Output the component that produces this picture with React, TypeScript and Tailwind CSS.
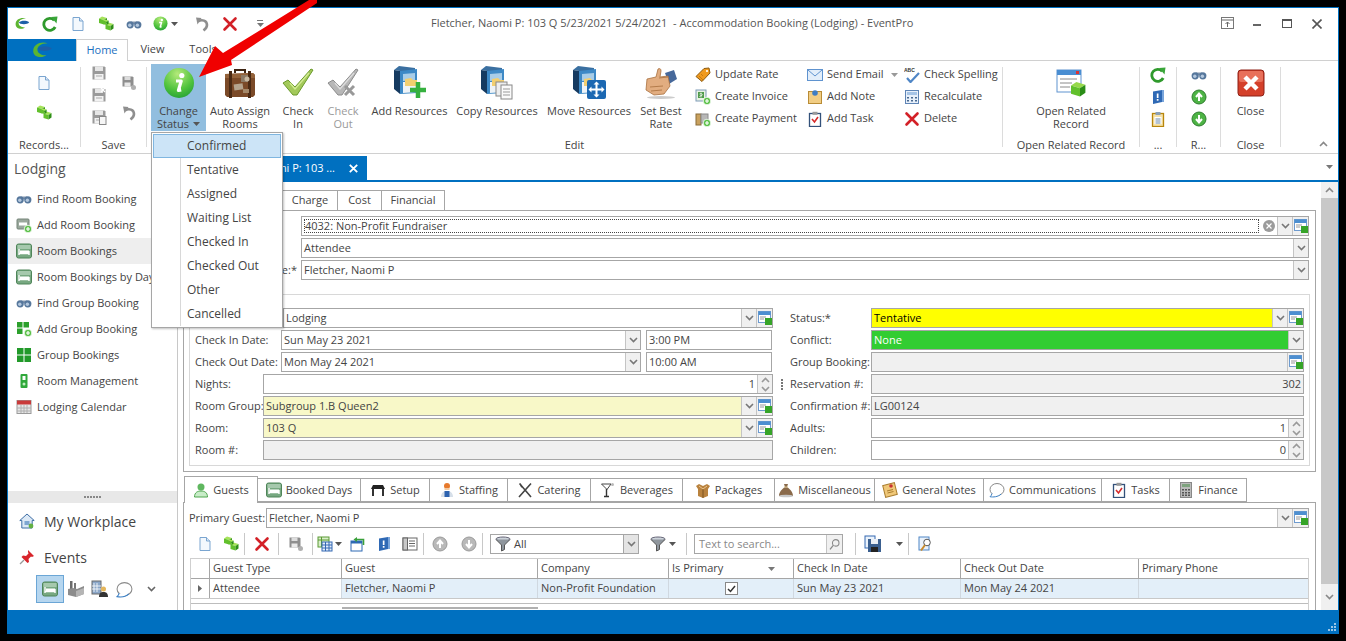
import React from "react";

type IP = { s?: number };
const Svg = ({ s = 16, v = 16, children }: { s?: number; v?: number; children: React.ReactNode }) => (
  <svg width={s} height={s} viewBox={`0 0 ${v} ${v}`} className="shrink-0 block">{children}</svg>
);

const CubeShape = ({ x, y, c = 1, dark = "#2f8f17", mid = "#62c02c", top = "#a6e35a" }: { x: number; y: number; c?: number; dark?: string; mid?: string; top?: string }) => (
  <g transform={`translate(${x} ${y}) scale(${c})`}>
    <polygon points="0,2 3,0 8,1.5 5,3.5" fill={top} />
    <polygon points="0,2 5,3.5 5,8 0,6.5" fill={mid} />
    <polygon points="5,3.5 8,1.5 8,6 5,8" fill={dark} />
  </g>
);

const Eyes = ({ s }: IP) => (
  <Svg s={s}>
    <rect x="5" y="5.5" width="6" height="2.5" fill="#8195ad" />
    <circle cx="4.2" cy="8.8" r="3.6" fill="#56779c" />
    <circle cx="11.8" cy="8.8" r="3.6" fill="#56779c" />
    <circle cx="3.8" cy="9.3" r="1.7" fill="#b4c8de" />
    <circle cx="11.4" cy="9.3" r="1.7" fill="#b4c8de" />
  </Svg>
);
const Refresh = ({ s }: IP) => (
  <Svg s={s}>
    <path d="M12.2 4.2A6 6 0 1 0 13.2 11" fill="none" stroke="#2f9a2c" strokeWidth="2.8" />
    <polygon points="9,1 15.5,0.5 14.5,7.5" fill="#3aa63a" />
  </Svg>
);
const NewDoc = ({ s }: IP) => (
  <Svg s={s}>
    <path d="M3 1.5h6.5L13 5v9.5H3z" fill="#f3f8fd" stroke="#7aa5d0" />
    <path d="M9.5 1.5V5H13" fill="#dbe8f5" stroke="#7aa5d0" />
  </Svg>
);
const Cubes = ({ s }: IP) => (
  <Svg s={s}>
    <CubeShape x={1} y={0.5} />
    <CubeShape x={7.5} y={6.5} />
    <CubeShape x={5} y={3.5} c={0.7} />
  </Svg>
);
const Info = ({ s = 16 }: IP) => (
  <svg width={s} height={s} viewBox="0 0 32 32" className="shrink-0 block">
    <defs>
      <radialGradient id="ig" cx="0.45" cy="0.2" r="0.9">
        <stop offset="0" stopColor="#b5ea7a" />
        <stop offset="0.6" stopColor="#4ec23c" />
        <stop offset="1" stopColor="#1d9a35" />
      </radialGradient>
    </defs>
    <circle cx="16" cy="16" r="15" fill="url(#ig)" />
    <circle cx="18.8" cy="8.5" r="2.6" fill="#fff" />
    <path d="M13 14h5.2l-2.8 9.5 2.8-.6" fill="none" stroke="#fff" strokeWidth="3.2" strokeLinejoin="round" />
  </svg>
);
const Undo = ({ s, c = "#8f8f8f" }: IP & { c?: string }) => (
  <Svg s={s}>
    <path d="M4 5.5c4-2.5 9-1 9 3.5 0 2.5-1.500 4-3.500 5.500" fill="none" stroke={c} strokeWidth="2.600" />
    <polygon points="2,1.500 7.500,2 3.500,8.500" fill={c} />
  </Svg>
);
const RedX = ({ s }: IP) => (
  <Svg s={s}>
    <path d="M2.500 2.500l11 11M13.500 2.500l-11 11" stroke="#d32027" strokeWidth="2.600" strokeLinecap="round" />
  </Svg>
);
const Caret = ({ c = "#555" }: { c?: string }) => (
  <svg width="7" height="4" viewBox="0 0 7 4" className="shrink-0 block"><polygon points="0,0 7,0 3.500,4" fill={c} /></svg>
);
const Chev = ({ c = "#777", up = false }: { c?: string; up?: boolean }) => (
  <svg width="9" height="6" viewBox="0 0 9 6" className="shrink-0 block">
    <path d={up ? "M1 5l3.500-3.500L8 5" : "M1 1l3.500 3.500L8 1"} fill="none" stroke={c} strokeWidth="1.600" />
  </svg>
);
const Floppy = ({ s, c = "#9a9a9a", mark }: IP & { c?: string; mark?: "x" | "doc" }) => (
  <Svg s={s}>
    <path d="M1.500 1.500h12l1 1v12h-13z" fill={c} />
    <rect x="4" y="1.500" width="8" height="4.500" fill="#e6e6e6" />
    <rect x="3.500" y="9" width="9" height="5.500" fill="#f2f2f2" />
    <rect x="5" y="10.500" width="6" height="1" fill="#aaa" />
    {mark === "x" && <path d="M10 1l4 4M14 1l-4 4" stroke="#fff" strokeWidth="1.300" />}
    {mark === "doc" && <rect x="8.500" y="7.500" width="6.500" height="8" fill="#f6f6f6" stroke="#888" />}
  </Svg>
);
const FloppyMini = ({ s }: IP) => (
  <Svg s={s}>
    <path d="M1.500 1.500h10l1 1v9h-11z" fill="#8e8e8e" />
    <rect x="3.500" y="1.500" width="6" height="3.500" fill="#dcdcdc" />
    <rect x="3.500" y="7.500" width="6" height="4" fill="#e9e9e9" />
    <circle cx="12.500" cy="12.500" r="2.500" fill="#b0b0b0" />
  </Svg>
);
const Suitcase = ({ s = 32 }: IP) => (
  <Svg s={s} v={32}>
    <path d="M11 6V3h10v3" fill="none" stroke="#3d2412" strokeWidth="2" />
    <path d="M1 7l28-1 2 2v20l-2 2H3l-2-2z" fill="#7b4a28" />
    <path d="M1 7l28-1 2 2v3H1z" fill="#93623a" />
    <rect x="5" y="4" width="3" height="27" fill="#4a2a14" />
    <rect x="24" y="4" width="3" height="27" fill="#4a2a14" />
    <rect x="10" y="17" width="9" height="6" fill="#b4a48e" transform="rotate(-8 14 20)" />
    <rect x="17" y="8" width="7" height="7" fill="#8c7a66" />
    <circle cx="23" cy="12" r="2.500" fill="#c7b7a0" />
    <rect x="19" y="22" width="6" height="4" fill="#a5896a" />
  </Svg>
);
const BigCheck = ({ s = 32, gray }: IP & { gray?: boolean }) => (
  <Svg s={s} v={32}>
    <path d="M1 16l5-3 7 7L29 2l2 1-16 25h-4z" fill={gray ? "#b7b7b7" : "#a3c95a"} stroke={gray ? "#8c8c8c" : "#6b9a2c"} />
    <path d="M8 16l5 6L27 6" fill="none" stroke={gray ? "#dcdcdc" : "#d4ec94"} strokeWidth="1.400" />
    {gray && <path d="M18 19l9 9M27 19l-9 9" stroke="#999" strokeWidth="3" />}
  </Svg>
);
const Cabinet = ({ kind }: { kind: "plus" | "copy" | "move" }) => (
  <Svg s={34} v={34}>
    <polygon points="1,4 6,0 22,2 22,5 7,5" fill="#3a6fa0" />
    <polygon points="1,4 7,5 7,28 1,23" fill="#153a60" />
    <polygon points="7,5 24,3 24,27 7,28" fill="#3d89c6" />
    <polygon points="10,8 22,7 22,14 10,15" fill="#a8cde8" />
    <polygon points="10,16 24,16 24,26 10,27" fill="#eef3f7" />
    <polygon points="12,13 18,12 20,14 24,14 24,20 12,20" fill="#f2cf70" />
    {kind === "plus" && <path d="M25 16v16M17 24h16" stroke="#35b13f" strokeWidth="4.500" />}
    {kind === "copy" && (
      <g>
        <rect x="16" y="16" width="11" height="14" fill="#eee" stroke="#888" />
        <rect x="21" y="19" width="11" height="14" fill="#fafafa" stroke="#888" />
        <path d="M23 23h7M23 26h7M23 29h7" stroke="#999" />
      </g>
    )}
    {kind === "move" && (
      <g>
        <rect x="15" y="14" width="19" height="19" rx="2" fill="#1c68b2" />
        <path d="M24.500 17v13M18 23.500h13" stroke="#fff" strokeWidth="2" />
        <path d="M24.500 15.500l3 3h-6zM24.500 31.500l3-3h-6zM16.500 23.500l3-3v6zM32.500 23.500l-3-3v6z" fill="#fff" />
      </g>
    )}
  </Svg>
);
const Hand = () => (
  <Svg s={34} v={34}>
    <path d="M21 7l9-3 3 9-8 5z" fill="#46689a" />
    <path d="M3 13l9-2 2-8c2-1 3 0 3 2l-1 6 8-1 2 10-6 8-10 1-8-5z" fill="#e2ad80" stroke="#a8703f" strokeWidth="0.800" />
    <path d="M6 21l13-1M7 25l11-1M15 12l9-1" stroke="#b47c4b" strokeWidth="1" />
    <ellipse cx="17" cy="31.500" rx="14" ry="1.500" fill="#ccc" />
  </Svg>
);
const Tag = () => (
  <Svg>
    <path d="M1 9.500L9 1.500l5-.5 1 5-8 8.500z" fill="#f09a1e" stroke="#8b5a10" />
    <circle cx="12" cy="4" r="1.100" fill="#fff" />
    <path d="M4 9l4 4M6 7l2 2" stroke="#c87a10" />
  </Svg>
);
const PlusDot = () => (
  <g>
    <circle cx="12" cy="12" r="3.800" fill="#5cc14a" stroke="#fff" strokeWidth="0.800" />
    <path d="M12 10v4M10 12h4" stroke="#fff" strokeWidth="1.200" />
  </g>
);
const Invoice = () => (
  <Svg>
    <rect x="1" y="1" width="10" height="11" fill="#e8f2e4" stroke="#7f9bb8" />
    <rect x="3" y="3" width="6" height="6" fill="#4f9b4c" />
    <path d="M6 3.500v5M4.500 5c1-1 3 0 3 .9s-3 .6-3 1.800" fill="none" stroke="#fff" strokeWidth="0.700" />
    <PlusDot />
  </Svg>
);
const Payment = () => (
  <Svg>
    <rect x="1" y="3" width="5" height="11" fill="#c9a15e" stroke="#8a6c38" />
    <rect x="6" y="3" width="7" height="9" fill="#b7b7b7" stroke="#8a8a8a" />
    <PlusDot />
  </Svg>
);
const Mail = () => (
  <Svg>
    <rect x="0.500" y="2.500" width="15" height="11" fill="#e3eefa" stroke="#5f93cf" />
    <path d="M1 3l7 6 7-6" fill="none" stroke="#5f93cf" />
  </Svg>
);
const Note = () => (
  <Svg>
    <rect x="1.500" y="2.500" width="13" height="12" fill="#f1cd84" stroke="#b98c36" />
    <circle cx="8" cy="4" r="2.800" fill="#3f7dc4" />
  </Svg>
);
const TaskIcon = ({ s }: IP) => (
  <Svg s={s}>
    <rect x="2.500" y="2.500" width="11" height="13" fill="#fff" stroke="#33517a" strokeWidth="1.300" />
    <rect x="5.500" y="0.800" width="5" height="3" fill="#999" />
    <path d="M5 8l2.500 3 3.500-5" fill="none" stroke="#d62b2b" strokeWidth="1.600" />
  </Svg>
);
const Abc = () => (
  <Svg>
    <text x="0" y="5" fontSize="5" fontWeight="700" fontFamily="'Liberation Sans', sans-serif" fill="#333">ABC</text>
    <path d="M3 11l3.500 4L15 6" fill="none" stroke="#4f86c6" strokeWidth="2.200" />
  </Svg>
);
const CalcBlue = () => (
  <Svg>
    <rect x="1.500" y="1.500" width="13" height="13" fill="#e8f0fa" stroke="#5f85b6" />
    <rect x="3" y="3" width="10" height="3" fill="#a6c4e6" />
    <path d="M3 8h2v1.500H3zM7 8h2v1.500H7zM11 8h2v1.500h-2zM3 11h2v1.500H3zM7 11h2v1.500H7zM11 11h2v1.500h-2z" fill="#47688f" />
  </Svg>
);
const OpenRelated = () => (
  <Svg s={32} v={32}>
    <rect x="2" y="3" width="24" height="22" fill="#fff" stroke="#5f93cf" />
    <rect x="2" y="3" width="24" height="5" fill="#4a8ed2" />
    <rect x="21" y="4" width="3" height="3" fill="#d33" />
    <path d="M5 12h17M5 16h12M5 20h10" stroke="#8a8a8a" />
    <CubeShape x={16} y={15} c={1.800} dark="#2a8d17" mid="#62c02c" top="#97d94b" />
  </Svg>
);
const BlueBook = ({ s }: IP) => (
  <Svg s={s}>
    <path d="M3 2.500l9-1.500v12l-9 2z" fill="#2f69b5" />
    <rect x="12" y="1" width="2" height="12" fill="#79a5db" />
    <rect x="6.800" y="4.500" width="1.700" height="4.500" fill="#fff" />
    <rect x="6.800" y="10" width="1.700" height="1.700" fill="#fff" />
  </Svg>
);
const ClipOrange = () => (
  <Svg>
    <rect x="2.500" y="2.500" width="11" height="13" fill="#f6e2a8" stroke="#b8860b" strokeWidth="1.300" />
    <rect x="5.500" y="1" width="5" height="3" fill="#8aa0b8" />
    <rect x="4.500" y="6" width="7" height="7" fill="#fff" />
    <path d="M5.500 8h5M5.500 10h5M5.500 12h5" stroke="#6a89a8" />
  </Svg>
);
const GreenArrow = ({ down, gray }: { down?: boolean; gray?: boolean }) => (
  <Svg>
    <circle cx="8" cy="8" r="7" fill={gray ? "#b9b9b9" : "#4db344"} stroke={gray ? "#9a9a9a" : "#2e7d2e"} />
    <path d={down ? "M8 4v7M5 8l3 3.500L11 8" : "M8 12V5M5 8l3-3.500L11 8"} fill="none" stroke="#fff" strokeWidth="2" />
  </Svg>
);
const CloseBig = () => (
  <Svg s={28} v={28}>
    <rect x="1" y="1" width="26" height="26" rx="3" fill="#d4402a" stroke="#8e2116" />
    <rect x="2" y="2" width="24" height="11" rx="2" fill="#e8705a" />
    <path d="M8 8l12 12M20 8L8 20" stroke="#fff" strokeWidth="4.500" />
  </Svg>
);
const Bed = ({ s = 16 }: IP) => (
  <Svg s={s}>
    <rect x="0.500" y="1" width="15" height="14" rx="2" fill="#77a881" stroke="#4f8559" />
    <rect x="1.500" y="2" width="13" height="4" fill="#a6c9ad" />
    <path d="M3 6v6M13 8v4M3 10.500h10" stroke="#fff" strokeWidth="1.400" />
    <rect x="4" y="7.500" width="9" height="2.500" fill="#fff" />
  </Svg>
);
const BedAdd = () => (
  <Svg>
    <rect x="1" y="2" width="12" height="10" rx="1" fill="#9aa89c" stroke="#748478" />
    <rect x="3" y="5.500" width="8" height="3" fill="#fff" />
    <PlusDot />
  </Svg>
);
const GridAdd = () => (
  <Svg>
    <path d="M1 1h5.500v5.500H1zM7.500 1H13v5.500H7.500zM1 7.500h5.500V13H1z" fill="#2ca02c" />
    <PlusDot />
  </Svg>
);
const GridGreen = () => (
  <Svg>
    <path d="M1 1h6.500v6.500H1zM8.500 1H15v6.500H8.500zM1 8.500h6.500V15H1zM8.500 8.500H15V15H8.500z" fill="#229a2a" />
  </Svg>
);
const RoomMgmt = () => (
  <Svg>
    <rect x="4.500" y="1" width="7" height="14" rx="1" fill="#2fa83a" />
    <rect x="6.500" y="3" width="3" height="4" fill="#fff" />
    <circle cx="8" cy="11" r="1.500" fill="#bfeec0" />
  </Svg>
);
const CalendarIc = () => (
  <Svg>
    <rect x="1" y="1.500" width="14" height="13" fill="#e6e6e6" stroke="#9a9a9a" />
    <rect x="1" y="1.500" width="14" height="4" fill="#c93a3a" />
    <path d="M5 6v8M8 6v8M11 6v8M1 9h14M1 12h14" stroke="#b0b0b0" />
  </Svg>
);
const House = () => (
  <Svg>
    <path d="M8 1L0.800 7.500h2V15h10.400V7.500h2z" fill="#dce9f6" stroke="#3f6ea5" />
    <rect x="5.500" y="8" width="5" height="4" fill="#7da6d1" />
    <circle cx="12" cy="13" r="2.400" fill="#63b043" />
  </Svg>
);
const Pin = () => (
  <Svg>
    <path d="M9 1l6 6-2 1-1-.5L9.500 10l.5 3-1.500 1-6-6L4 6.500l3 .5 2.500-2.500L9 3z" fill="#d8252b" />
    <path d="M5 11l-4 4" stroke="#999" strokeWidth="1.200" />
  </Svg>
);
const Factory = () => (
  <Svg s={18} v={18}>
    <rect x="3" y="1" width="2.500" height="8" fill="#6b6b6b" />
    <rect x="7" y="3" width="2" height="6" fill="#777" />
    <path d="M1 9l5 -1 4 1 7-3v8l-8 3-8-2z" fill="#8c8c8c" />
    <path d="M9 11l8-3v6l-8 3z" fill="#b5b5b5" />
  </Svg>
);
const BuildingPerson = () => (
  <Svg s={18} v={18}>
    <rect x="1" y="1" width="9" height="13" fill="#8ba7c9" stroke="#6a6a6a" />
    <path d="M3 3v9M6 3v9M1 6h9M1 9h9" stroke="#fff" strokeWidth="0.800" />
    <circle cx="12.500" cy="9" r="2.500" fill="#e5b65a" />
    <path d="M8 17c0-4 2-5 4.500-5s4.500 1 4.500 5z" fill="#333" />
  </Svg>
);
const Bubble = ({ s = 16 }: IP) => (
  <Svg s={s}>
    <ellipse cx="8" cy="7.500" rx="7" ry="6" fill="#fff" stroke="#8a8a8a" />
    <path d="M3 11.500c-.3 1.500-1 2.500-2 3.200 3 .6 8 .3 11-2.600" fill="#fff" stroke="#3b7fc4" />
  </Svg>
);
const Person = () => (
  <Svg>
    <circle cx="8" cy="5" r="3.500" fill="#5fb75f" />
    <path d="M1.500 15c0-4.500 3-6 6.500-6s6.500 1.500 6.500 6z" fill="#c8ecc8" stroke="#4ea64e" />
  </Svg>
);
const TableBlack = () => (
  <Svg>
    <path d="M3 3h10l2 4H1z" fill="#222" />
    <path d="M2 7h2v7H2zM12 7h2v7h-2z" fill="#333" />
  </Svg>
);
const Staff = () => (
  <Svg>
    <circle cx="8" cy="4" r="3" fill="#e77a2c" />
    <rect x="5.500" y="6" width="5" height="2" fill="#f3c9a0" />
    <path d="M2 15c0-4 2.500-6 6-6s6 2 6 6z" fill="#d6dfe9" />
    <rect x="5.500" y="9" width="5" height="6" fill="#2d63b0" />
  </Svg>
);
const Catering = () => (
  <Svg>
    <path d="M2 1l12 14M3.500 1v3c0 1 1 1 2 2M6 1L14 1" stroke="none" />
    <path d="M2.500 1.500l11.500 13.500M14 1.500L2 15" stroke="#444" strokeWidth="1.600" />
  </Svg>
);
const Martini = () => (
  <Svg>
    <path d="M1.500 2h9.500L7 7.500z" fill="#fff" stroke="#444" />
    <path d="M6.500 7v7M4 14.500h5" stroke="#333" strokeWidth="1.400" />
    <circle cx="12.500" cy="2.500" r="1.500" fill="#b9b9b9" />
  </Svg>
);
const BoxIc = () => (
  <Svg>
    <path d="M1 4l3-2 4 2 4-2 3 2-2 3v7l-5 2-5-2V7z" fill="#b9823e" />
    <path d="M8 7v9" stroke="#7a5220" />
    <path d="M4 4l4 3 4-3" fill="none" stroke="#eac48e" />
  </Svg>
);
const Sack = () => (
  <Svg>
    <path d="M6 2h4l-1 3c3 2 6 5 6 9H1c0-4 3-7 6-9z" fill="#8a6a4a" />
    <rect x="6" y="4.500" width="4" height="1.200" fill="#d8c090" />
    <ellipse cx="8" cy="14" rx="7" ry="1.300" fill="#c8c8c8" />
  </Svg>
);
const GenNote = () => (
  <Svg>
    <rect x="2" y="2" width="12" height="12" fill="#f0c879" stroke="#a97c2c" transform="rotate(-14 8 8)" />
    <path d="M5 9l6-1.500M5.500 11l6-1.500" stroke="#a97c2c" />
    <circle cx="9" cy="4" r="1.800" fill="#c83232" />
  </Svg>
);
const CalcGray = () => (
  <Svg>
    <rect x="2.500" y="0.500" width="11" height="15" fill="#bbb" stroke="#888" />
    <rect x="4" y="2" width="8" height="3" fill="#7ea37e" />
    <path d="M4 7h2v1.500H4zM7 7h2v1.500H7zM10 7h2v1.500h-2zM4 10h2v1.500H4zM7 10h2v1.500H7zM10 10h2v1.500h-2zM4 12.500h2V14H4zM7 12.500h2V14H7zM10 12.500h2V14h-2z" fill="#555" />
  </Svg>
);
const Link = () => (
  <Svg>
    <rect x="1.500" y="1.500" width="12" height="11" fill="#fff" stroke="#6e9bcf" />
    <rect x="1.500" y="1.500" width="12" height="3.500" fill="#4d8fd0" />
    <path d="M3 7h6M3 9h4" stroke="#999" />
    <rect x="8" y="8" width="7" height="7" fill="#36a428" />
  </Svg>
);
const Funnel = ({ s = 16 }: IP) => (
  <Svg s={s}>
    <ellipse cx="8" cy="3" rx="7" ry="2" fill="#ccd3da" stroke="#667" />
    <path d="M1 3.500L6.500 9v6l3-1.500V9L15 3.500" fill="#8f969d" stroke="#555" />
  </Svg>
);
const ColumnsIc = () => (
  <Svg>
    <rect x="1" y="1" width="11" height="10" fill="#d9efc9" stroke="#5b9a34" />
    <path d="M1 4h11M4.500 1v10" stroke="#5b9a34" />
    <rect x="5" y="6" width="10" height="9" fill="#e3eefc" stroke="#3468b2" />
    <path d="M5 9h10M5 12h10M8.500 6v9M12 6v9" stroke="#3468b2" />
  </Svg>
);
const WinArrow = () => (
  <Svg>
    <rect x="1" y="5" width="11" height="10" fill="#fff" stroke="#2d69b3" />
    <rect x="1" y="5" width="11" height="2.500" fill="#2d69b3" />
    <path d="M6 3.500h7.500V9" fill="none" stroke="#3aa03a" strokeWidth="1.600" />
    <polygon points="7,1 7,6 3.500,3.500" fill="#3aa03a" />
  </Svg>
);
const PanelIc = () => (
  <Svg>
    <rect x="1" y="2" width="14" height="12" fill="#fff" stroke="#666" />
    <rect x="1" y="2" width="4.500" height="12" fill="#c9c9c9" stroke="#666" />
    <path d="M7 5h6M7 7.500h6M7 10h6" stroke="#666" />
  </Svg>
);
const SaveBlue = () => (
  <Svg s={18} v={18}>
    <rect x="1" y="1" width="10" height="12" fill="#eaf2fb" stroke="#3468b2" />
    <rect x="4" y="4" width="13" height="13" fill="#3a5f8f" />
    <rect x="7" y="4" width="7" height="5" fill="#e9eef5" />
    <rect x="7" y="12" width="7" height="5" fill="#222" />
  </Svg>
);
const SearchDoc = () => (
  <Svg>
    <rect x="2" y="1" width="10" height="13" fill="#eaf2fb" stroke="#4f86c6" />
    <circle cx="10" cy="6.500" r="3.300" fill="#fff" stroke="#555" />
    <path d="M8 9l-4 5.500" stroke="#c98a2a" strokeWidth="2" />
  </Svg>
);
const Mag = () => (
  <Svg s={13}>
    <circle cx="9.500" cy="6" r="4" fill="none" stroke="#888" strokeWidth="1.300" />
    <path d="M6.500 9l-4 5" stroke="#888" strokeWidth="1.600" />
  </Svg>
);
const Logo = ({ w = 18 }: { w?: number }) => (
  <svg width={w} height={w * 0.8} viewBox="0 0 20 16" className="shrink-0 block">
    <path d="M2 9C2 3 9 0 15 2 9 2 5 5 6 9c1 3 5 4 8 4-4 3-12 2-12-4z" fill="#5cb531" />
    <path d="M6 7c3-3 9-3 13-.5-2 2.500-6 3-11 2z" fill="#1d5fa8" />
  </svg>
);

const Btn = ({ icon, lines, w, ml, active, dim, caret }: { icon: React.ReactNode; lines: string[]; w: string; ml: string; active?: boolean; dim?: boolean; caret?: boolean }) => (
  <div className={`${w} ${ml} h-[67px] flex flex-col items-center pt-[3px] shrink-0 ${active ? "bg-[#91bedf]" : ""} ${dim ? "text-[#9a9a9a]" : ""}`}>
    <div className="h-[32px] flex items-center justify-center">{icon}</div>
    <div className="mt-[5px] leading-[13px] text-center whitespace-nowrap">
      {lines.map((l, i) => (
        <div key={i} className="flex items-center justify-center gap-[4px]">
          {l}
          {caret && i === lines.length - 1 && <Caret />}
        </div>
      ))}
    </div>
  </div>
);
const Small = ({ icon, label, caret }: { icon: React.ReactNode; label: string; caret?: boolean }) => (
  <div className="h-[22px] flex items-center gap-[4px] whitespace-nowrap">
    <div className="w-[16px] flex justify-center">{icon}</div>
    <span className="mt-[-1px]">{label}</span>
    {caret && <span className="ml-[3px]"><Caret c="#999" /></span>}
  </div>
);
const Sep = () => <div className="w-px h-[80px] mt-[6px] bg-[#dcdcdc] shrink-0" />;
const GroupLabel = ({ children }: { children: React.ReactNode }) => (
  <div className="h-[18px] flex items-center justify-center leading-none whitespace-nowrap">{children}</div>
);

const Arrow = ({ c }: { c?: string }) => (
  <div className="w-[15px] h-full bg-[#f0f0f0] border-l border-[#c4c4c4] flex items-center justify-center shrink-0"><Chev c={c} /></div>
);
const LinkBtn = () => (
  <div className="w-[16px] h-full bg-[#f0f0f0] border-l border-[#c4c4c4] flex items-center justify-center shrink-0"><Link /></div>
);
const Spin = () => (
  <div className="w-[15px] h-full bg-[#f0f0f0] border-l border-[#c4c4c4] flex flex-col items-center justify-center gap-[3px] shrink-0">
    <Chev c="#999" up />
    <Chev c="#999" />
  </div>
);
const Field = ({ className = "", bg = "bg-white", text = "", right, arrow, link, spin, focus, clear, color = "" }: { className?: string; bg?: string; text?: string; right?: boolean; arrow?: boolean; link?: boolean; spin?: boolean; focus?: boolean; clear?: boolean; color?: string }) => (
  <div className={`h-[20px] border border-[#a6a6a6] flex items-stretch ${bg} ${className}`}>
    <div className={`flex-1 min-w-0 px-[2px] flex items-center whitespace-nowrap ${right ? "justify-end" : ""} ${color}`}>
      {focus ? <div className="w-full h-[14px] border border-dotted border-[#444] flex items-center">{text}</div> : text}
    </div>
    {clear && (
      <div className="w-[16px] flex items-center justify-center">
        <div className="w-[12px] h-[12px] rounded-full bg-[#9b9b9b] text-white flex items-center justify-center">
          <svg width="6" height="6" viewBox="0 0 6 6"><path d="M0.500 0.500l5 5M5.500 0.500l-5 5" stroke="#fff" strokeWidth="1.200" /></svg>
        </div>
      </div>
    )}
    {arrow && <Arrow />}
    {link && <LinkBtn />}
    {spin && <Spin />}
  </div>
);
const Row = ({ label, w, children }: { label: string; w: string; children: React.ReactNode }) => (
  <div className="h-[20px] flex items-center">
    <div className={`${w} shrink-0 whitespace-nowrap`}>{label}</div>
    {children}
  </div>
);

const navItems: [React.ReactNode, string][] = [
  [<Eyes />, "Find Room Booking"],
  [<BedAdd />, "Add Room Booking"],
  [<Bed />, "Room Bookings"],
  [<Bed />, "Room Bookings by Day"],
  [<Eyes />, "Find Group Booking"],
  [<GridAdd />, "Add Group Booking"],
  [<GridGreen />, "Group Bookings"],
  [<RoomMgmt />, "Room Management"],
  [<CalendarIc />, "Lodging Calendar"],
];

const bottomTabs: [React.ReactNode, string, string][] = [
  [<Person />, "Guests", "w-[74px]"],
  [<Bed />, "Booked Days", "w-[103px]"],
  [<TableBlack />, "Setup", "w-[69px]"],
  [<Staff />, "Staffing", "w-[78px]"],
  [<Catering />, "Catering", "w-[83px]"],
  [<Martini />, "Beverages", "w-[92px]"],
  [<BoxIc />, "Packages", "w-[92px]"],
  [<Sack />, "Miscellaneous", "w-[100px]"],
  [<GenNote />, "General Notes", "w-[109px]"],
  [<Bubble />, "Communications", "w-[118px]"],
  [<TaskIcon />, "Tasks", "w-[68px]"],
  [<CalcGray />, "Finance", "w-[77px]"],
];

const ToolSep = () => <div className="w-px h-[22px] bg-[#c8c8c8] shrink-0" />;
const Tool = ({ w, children }: { w: string; children: React.ReactNode }) => (
  <div className={`${w} h-full flex items-center justify-center shrink-0`}>{children}</div>
);

const cols: [string, string][] = [
  ["w-[132px]", "Guest Type"],
  ["w-[196px]", "Guest"],
  ["w-[131px]", "Company"],
  ["w-[125px]", "Is Primary"],
  ["w-[167px]", "Check In Date"],
  ["w-[178px]", "Check Out Date"],
  ["flex-1", "Primary Phone"],
];
const rowVals = ["Attendee", "Fletcher, Naomi P", "Non-Profit Foundation", "", "Sun May 23 2021", "Mon May 24 2021", ""];

const menu = ["Tentative", "Assigned", "Waiting List", "Checked In", "Checked Out", "Other", "Cancelled"];

export default function App() {
  return (
    <div className="relative w-[1346px] h-[641px] bg-black pt-[7px] pl-[7px] overflow-hidden text-[11px] text-[#444] font-['Open_Sans',sans-serif]">
      <div className="w-[1332px] h-[627px] bg-white border-x border-t border-[#0070c0] flex flex-col">
        {/* title bar */}
        <div className="h-[31px] flex items-center shrink-0">
          <div className="w-[28px] flex justify-center"><Logo w={16} /></div>
          <div className="w-[28px] flex justify-center"><Refresh /></div>
          <div className="w-[28px] flex justify-center"><NewDoc /></div>
          <div className="w-[28px] flex justify-center"><Cubes /></div>
          <div className="w-[28px] flex justify-center"><Eyes /></div>
          <div className="w-[28px] flex justify-center items-center gap-[3px] pl-[6px]"><Info s={15} /><Caret /></div>
          <div className="w-[28px] flex justify-center ml-[12px]"><Undo /></div>
          <div className="w-[28px] flex justify-center"><RedX /></div>
          <div className="w-[32px] flex flex-col items-center gap-[2px]">
            <div className="w-[6px] h-px bg-[#777]" />
            <Caret c="#777" />
          </div>
          <div className="ml-[155px] text-[#555] whitespace-nowrap">Fletcher, Naomi P: 103 Q 5/23/2021 5/24/2021&nbsp; - Accommodation Booking (Lodging) - EventPro</div>
          <div className="ml-auto flex items-center">
            <div className="w-[30px] flex justify-center">
              <svg width="13" height="13" viewBox="0 0 13 13"><rect x="0.500" y="0.500" width="12" height="11" fill="none" stroke="#777" /><path d="M1 3h11M6.500 10V5M4.500 7l2-2 2 2" fill="none" stroke="#666" /></svg>
            </div>
            <div className="w-[30px] flex justify-center"><div className="w-[8px] h-[2px] mt-[3px] bg-[#666]" /></div>
            <div className="w-[30px] flex justify-center"><div className="w-[10px] h-[9px] border border-t-2 border-[#555]" /></div>
            <div className="w-[36px] flex justify-center pr-[6px]">
              <svg width="10" height="10" viewBox="0 0 10 10"><path d="M0.500 0.500l9 9M9.500 0.500l-9 9" stroke="#555" strokeWidth="1.600" /></svg>
            </div>
          </div>
        </div>

        {/* ribbon tabs */}
        <div className="h-[22px] flex border-b border-[#d0d0d0] shrink-0">
          <div className="w-[68px] h-[22px] bg-[#0070c0] flex items-center justify-center"><Logo w={22} /></div>
          <div className="w-[52px] h-[22px] bg-white border border-b-0 border-[#d0d0d0] text-[#1a6fc0] flex items-center justify-center">Home</div>
          <div className="w-[49px] flex items-center justify-center">View</div>
          <div className="w-[52px] flex items-center justify-center">Tools</div>
        </div>

        {/* ribbon */}
        <div className="h-[93px] flex border-b border-[#d0d0d0] shrink-0 relative">
          <div className="w-[72px] flex flex-col shrink-0">
            <div className="h-[74px] flex flex-col items-center pt-[14px] gap-[14px]"><NewDoc /><Cubes /></div>
            <GroupLabel>Records...</GroupLabel>
          </div>
          <Sep />
          <div className="w-[65px] flex flex-col shrink-0">
            <div className="h-[74px] flex pl-[10px] pt-[4px] gap-[14px]">
              <div className="flex flex-col gap-[6px]"><Floppy /><Floppy mark="x" /><Floppy mark="doc" /></div>
              <div className="flex flex-col gap-[14px] pt-[10px]"><FloppyMini /><Undo /></div>
            </div>
            <GroupLabel>Save</GroupLabel>
          </div>
          <Sep />
          <div className="w-[855px] flex flex-col shrink-0">
            <div className="h-[74px] flex pt-[3px]">
              <Btn ml="ml-[4px]" w="w-[55px]" active caret icon={<Info s={32} />} lines={["Change", "Status"]} />
              <Btn ml="ml-[2px]" w="w-[64px]" icon={<Suitcase />} lines={["Auto Assign", "Rooms"]} />
              <Btn ml="ml-[5px]" w="w-[42px]" icon={<BigCheck />} lines={["Check", "In"]} />
              <Btn ml="ml-[3px]" w="w-[42px]" dim icon={<BigCheck gray />} lines={["Check", "Out"]} />
              <Btn ml="ml-[6px]" w="w-[79px]" icon={<Cabinet kind="plus" />} lines={["Add Resources"]} />
              <Btn ml="ml-[5px]" w="w-[86px]" icon={<Cabinet kind="copy" />} lines={["Copy Resources"]} />
              <Btn ml="ml-[5px]" w="w-[88px]" icon={<Cabinet kind="move" />} lines={["Move Resources"]} />
              <Btn ml="ml-[4px]" w="w-[48px]" icon={<Hand />} lines={["Set Best", "Rate"]} />
              <div className="ml-[10px] w-[112px] shrink-0">
                <Small icon={<Tag />} label="Update Rate" />
                <Small icon={<Invoice />} label="Create Invoice" />
                <Small icon={<Payment />} label="Create Payment" />
              </div>
              <div className="w-[97px] shrink-0">
                <Small icon={<Mail />} label="Send Email" caret />
                <Small icon={<Note />} label="Add Note" />
                <Small icon={<TaskIcon />} label="Add Task" />
              </div>
              <div className="shrink-0">
                <Small icon={<Abc />} label="Check Spelling" />
                <Small icon={<CalcBlue />} label="Recalculate" />
                <Small icon={<RedX />} label="Delete" />
              </div>
            </div>
            <GroupLabel>Edit</GroupLabel>
          </div>
          <Sep />
          <div className="w-[136px] flex flex-col shrink-0">
            <div className="h-[74px] pt-[3px]">
              <Btn ml="ml-0" w="w-full" icon={<OpenRelated />} lines={["Open Related", "Record"]} />
            </div>
            <GroupLabel>Open Related Record</GroupLabel>
          </div>
          <Sep />
          <div className="w-[36px] flex flex-col shrink-0">
            <div className="h-[74px] pt-[3px] flex flex-col items-center">
              <div className="h-[22px] flex items-center"><Refresh /></div>
              <div className="h-[22px] flex items-center"><BlueBook /></div>
              <div className="h-[22px] flex items-center"><ClipOrange /></div>
            </div>
            <GroupLabel>...</GroupLabel>
          </div>
          <Sep />
          <div className="w-[43px] flex flex-col shrink-0">
            <div className="h-[74px] pt-[3px] flex flex-col items-center">
              <div className="h-[22px] flex items-center"><Eyes /></div>
              <div className="h-[22px] flex items-center"><GreenArrow /></div>
              <div className="h-[22px] flex items-center"><GreenArrow down /></div>
            </div>
            <GroupLabel>R...</GroupLabel>
          </div>
          <Sep />
          <div className="w-[59px] flex flex-col shrink-0">
            <div className="h-[74px] pt-[3px]">
              <Btn ml="ml-0" w="w-full" icon={<CloseBig />} lines={["Close"]} />
            </div>
            <GroupLabel>Close</GroupLabel>
          </div>
          <Sep />
          <div className="flex-1 flex justify-end items-end pb-[6px] pr-[10px]"><Chev c="#888" up /></div>
        </div>

        {/* body */}
        <div className="h-[456px] flex shrink-0">
          {/* sidebar */}
          <div className="w-[170px] border-r border-[#c8c8c8] flex flex-col shrink-0">
            <div className="h-[32px] pl-[6px] pt-[5px] text-[14px] leading-[20px] text-[#555]">Lodging</div>
            {navItems.map(([ic, label], i) => (
              <div key={label} className={`h-[26px] flex items-center pl-[8px] gap-[5px] whitespace-nowrap ${i === 2 ? "bg-[#eeeeee]" : ""}`}>
                <div className="w-[16px] flex justify-center">{ic}</div>
                {label}
              </div>
            ))}
            <div className="flex-1" />
            <div className="h-[12px] bg-[#e8e8e8] flex items-center justify-center gap-[1px]">
              {[0, 1, 2, 3, 4, 5].map((d) => <div key={d} className="w-[2px] h-[2px] bg-[#888]" />)}
            </div>
            <div className="h-[36px] flex items-center pl-[11px] gap-[9px] text-[14px] text-[#444]"><House />My Workplace</div>
            <div className="h-[36px] flex items-center pl-[11px] gap-[9px] text-[14px] text-[#444]"><Pin />Events</div>
            <div className="flex-1 max-h-[35px] flex items-start pl-[28px]">
              <div className="w-[28px] h-[28px] bg-[#b6d6ef] border border-[#6ba6d6] flex items-center justify-center"><Bed /></div>
              <div className="w-[24px] h-[28px] flex items-center justify-center"><Factory /></div>
              <div className="w-[24px] h-[28px] flex items-center justify-center"><BuildingPerson /></div>
              <div className="w-[24px] h-[28px] flex items-center justify-center"><Bubble s={17} /></div>
              <div className="w-[30px] h-[28px] flex items-center justify-center"><Chev c="#666" /></div>
            </div>
          </div>

          {/* main */}
          <div className="flex-1 min-w-0 flex flex-col">
            <div className="h-[28px] border-b-2 border-[#0070c0] flex items-end pl-[5px] shrink-0">
              <div className="w-[184px] h-[24px] bg-[#0070c0] text-white flex items-center justify-end pr-[9px] gap-[14px] whitespace-nowrap">
                <span>Fletcher, Naomi P: 103 ...</span>
                <svg width="9" height="9" viewBox="0 0 9 9"><path d="M0.800 0.800l7.400 7.400M8.200 0.800l-7.400 7.400" stroke="#fff" strokeWidth="1.800" /></svg>
              </div>
              <div className="ml-auto mb-[11px] mr-[5px]"><Caret c="#777" /></div>
            </div>
            <div className="h-[428px] flex min-h-0">
              <div className="flex-1 min-w-0 pl-[5px] pr-[5px] overflow-hidden">
                <div className="h-[28px] flex items-end pt-[8px]">
                  <div className="w-[100px] h-[20px] border border-b-0 border-[#a6a6a6]" />
                  <div className="w-[55px] h-[20px] border border-b-0 border-l-0 border-[#a6a6a6] flex items-center justify-center">Charge</div>
                  <div className="w-[44px] h-[20px] border border-b-0 border-l-0 border-[#a6a6a6] flex items-center justify-center">Cost</div>
                  <div className="w-[63px] h-[20px] border border-b-0 border-l-0 border-[#a6a6a6] flex items-center justify-center">Financial</div>
                </div>
                <div className="h-[262px] border border-[#a6a6a6] px-[5px] pt-[5px]">
                  <div className="flex flex-col gap-[2px] mr-[1px]">
                    <div className="h-[20px] flex"><div className="w-[112px] shrink-0" /><Field className="flex-1" text="4032: Non-Profit Fundraiser" focus clear arrow link /></div>
                    <div className="h-[20px] flex"><div className="w-[112px] shrink-0" /><Field className="flex-1" text="Attendee" arrow /></div>
                    <div className="h-[20px] flex items-center">
                      <div className="w-[112px] shrink-0 text-right pr-[4px] whitespace-nowrap">Guest Name:*</div>
                      <Field className="flex-1" text="Fletcher, Naomi P" arrow />
                    </div>
                  </div>
                  <div className="mt-[14px] h-[172px] border border-[#d8d8d8] pt-[13px] pl-[5px] pr-[5px] flex">
                    <div className="w-[578px] flex flex-col gap-[2px] shrink-0">
                      <Row label="" w="w-[88px]"><Field className="flex-1" text="Lodging" arrow link /></Row>
                      <Row label="Check In Date:" w="w-[86px]">
                        <Field className="w-[360px]" text="Sun May 23 2021" arrow />
                        <Field className="w-[126px] ml-[5px]" text="3:00 PM" />
                      </Row>
                      <Row label="Check Out Date:" w="w-[86px]">
                        <Field className="w-[360px]" text="Mon May 24 2021" arrow />
                        <Field className="w-[126px] ml-[5px]" text="10:00 AM" />
                      </Row>
                      <Row label="Nights:" w="w-[68px]"><Field className="flex-1" text="1" right spin /></Row>
                      <Row label="Room Group:" w="w-[68px]"><Field className="flex-1" bg="bg-[#f8f8c8]" text="Subgroup 1.B Queen2" arrow link /></Row>
                      <Row label="Room:" w="w-[68px]"><Field className="flex-1" bg="bg-[#f8f8c8]" text="103 Q" arrow link /></Row>
                      <Row label="Room #:" w="w-[68px]"><Field className="flex-1" bg="bg-[#f0f0f0]" /></Row>
                    </div>
                    <div className="w-[17px] flex items-center justify-center shrink-0 pb-[0px]">
                      <div className="flex flex-col gap-[1px] mt-[-4px]">
                        <div className="w-[2px] h-[2px] bg-[#777]" />
                        <div className="w-[2px] h-[2px] bg-[#777]" />
                        <div className="w-[2px] h-[2px] bg-[#777]" />
                        <div className="w-[2px] h-[2px] bg-[#777]" />
                      </div>
                    </div>
                    <div className="flex-1 min-w-0 flex flex-col gap-[2px]">
                      <Row label="Status:*" w="w-[81px]"><Field className="flex-1 text-black" bg="bg-[#ffff00]" text="Tentative" arrow link /></Row>
                      <Row label="Conflict:" w="w-[81px]"><Field className="flex-1 text-white" bg="bg-[#32cd32]" text="None" arrow /></Row>
                      <Row label="Group Booking:" w="w-[81px]">
                        <div className="flex-1 h-[20px] border border-[#a6a6a6] bg-[#f0f0f0] flex justify-end"><LinkBtn /></div>
                      </Row>
                      <Row label="Reservation #:" w="w-[81px]"><Field className="flex-1" bg="bg-[#f0f0f0]" text="302" right /></Row>
                      <Row label="Confirmation #:" w="w-[81px]"><Field className="flex-1" bg="bg-[#f0f0f0]" text="LG00124" /></Row>
                      <Row label="Adults:" w="w-[81px]"><Field className="flex-1" text="1" right spin /></Row>
                      <Row label="Children:" w="w-[81px]"><Field className="flex-1" text="0" right spin /></Row>
                    </div>
                  </div>
                </div>

                {/* lower */}
                <div className="h-[28px] mt-[2px] flex items-end relative z-10">
                  {bottomTabs.map(([ic, label, w], i) => (
                    <div key={label} className={`${w} ${i === 0 ? "h-[27px] ml-[1px] border-b-0 bg-white -mb-px" : "h-[24px] border-l-0"} border border-[#a6a6a6] flex items-center justify-center gap-[4px] whitespace-nowrap shrink-0`}>
                      {ic}
                      {label}
                    </div>
                  ))}
                </div>
                <div className="h-[110px] border-x border-t border-[#a6a6a6] pl-[5px] pr-[6px] pt-[5px] overflow-hidden">
                  <div className="h-[20px] flex items-center">
                    <div className="w-[77px] shrink-0 whitespace-nowrap">Primary Guest:</div>
                    <Field className="flex-1" text="Fletcher, Naomi P" arrow link />
                  </div>
                  <div className="h-[22px] mt-[5px] flex items-center pl-[3px]">
                    <Tool w="w-[26px]"><NewDoc /></Tool>
                    <Tool w="w-[26px]"><Cubes /></Tool>
                    <ToolSep />
                    <Tool w="w-[33px]"><RedX /></Tool>
                    <ToolSep />
                    <Tool w="w-[33px]"><FloppyMini /></Tool>
                    <ToolSep />
                    <Tool w="w-[32px]"><div className="flex items-center gap-[2px]"><ColumnsIc /><Caret /></div></Tool>
                    <Tool w="w-[26px]"><WinArrow /></Tool>
                    <Tool w="w-[26px]"><BlueBook /></Tool>
                    <Tool w="w-[26px]"><PanelIc /></Tool>
                    <ToolSep />
                    <Tool w="w-[32px]"><GreenArrow gray /></Tool>
                    <Tool w="w-[26px]"><GreenArrow down gray /></Tool>
                    <ToolSep />
                    <div className="ml-[7px] w-[149px] h-[20px] border border-[#a6a6a6] flex items-center shrink-0">
                      <div className="flex-1 flex items-center gap-[3px] pl-[4px]"><Funnel />All</div>
                      <div className="w-[15px] h-full bg-[#e4e4e4] border-l border-[#a6a6a6] flex items-center justify-center"><Chev /></div>
                    </div>
                    <Tool w="w-[47px]"><div className="flex items-center gap-[3px]"><Funnel /><Caret /></div></Tool>
                    <ToolSep />
                    <div className="ml-[7px] w-[149px] h-[20px] border border-[#a6a6a6] flex items-center shrink-0 text-[#888]">
                      <div className="flex-1 pl-[4px] whitespace-nowrap">Text to search...</div>
                      <div className="w-[16px] h-full bg-[#f0f0f0] border-l border-[#c4c4c4] flex items-center justify-center"><Mag /></div>
                    </div>
                    <div className="w-[12px] shrink-0" />
                    <ToolSep />
                    <Tool w="w-[34px]"><SaveBlue /></Tool>
                    <Tool w="w-[18px]"><Caret /></Tool>
                    <ToolSep />
                    <Tool w="w-[32px]"><SearchDoc /></Tool>
                  </div>
                  <div className="mt-[3px] ml-[1px] h-[60px] border border-[#cfcfcf]">
                    <div className="h-[20px] flex border-b border-[#a6a6a6]">
                      <div className="w-[19px] border-r border-[#a6a6a6] shrink-0" />
                      {cols.map(([w, t], i) => (
                        <div key={t} className={`${w} ${i < 6 ? "border-r border-[#a6a6a6]" : ""} pl-[3px] flex items-center justify-between pr-[18px] whitespace-nowrap shrink-0`}>
                          {t}
                          {i === 3 && <Caret c="#777" />}
                        </div>
                      ))}
                    </div>
                    <div className="h-[20px] flex border-b border-[#c8c8c8]">
                      <div className="w-[19px] border-r border-[#a6a6a6] flex items-center justify-center shrink-0">
                        <svg width="4" height="7" viewBox="0 0 4 7"><polygon points="0,0 4,3.500 0,7" fill="#666" /></svg>
                      </div>
                      {cols.map(([w], i) => (
                        <div key={i} className={`${w} ${i > 0 ? "bg-[#e3eff9]" : ""} ${i < 6 ? "border-r border-[#d0d8e0]" : ""} pl-[3px] flex items-center whitespace-nowrap shrink-0 ${i === 3 ? "justify-center pr-[3px]" : ""}`}>
                          {i === 3 ? (
                            <div className="w-[13px] h-[13px] bg-white border border-[#888] flex items-center justify-center">
                              <svg width="9" height="8" viewBox="0 0 9 8"><path d="M1 4l2.500 2.500L8 1" fill="none" stroke="#333" strokeWidth="1.500" /></svg>
                            </div>
                          ) : rowVals[i]}
                        </div>
                      ))}
                    </div>
                    <div className="mt-[4px] border-t border-[#bdbdbd] h-[4px]" />
                    <div className="ml-[151px] w-[196px] h-[2px] bg-[#b0b0b0]" />
                  </div>
                </div>
              </div>
              {/* scrollbar */}
              <div className="w-[17px] flex flex-col bg-[#f0f0f0] shrink-0">
                <div className="h-[16px] flex items-center justify-center"><Chev c="#888" up /></div>
                <div className="h-[386px] bg-[#c8c8c8]" />
                <div className="flex-1 flex items-center justify-center"><Chev c="#888" /></div>
              </div>
            </div>
          </div>
        </div>

        {/* status bar */}
        <div className="flex-1 bg-[#0070c0] flex items-end justify-end pr-[2px] pb-[3px]">
          <div className="grid grid-cols-3 gap-[1px]">
            <span /><span /><div className="w-[2px] h-[2px] bg-[#9cc7e6]" />
            <span /><div className="w-[2px] h-[2px] bg-[#9cc7e6]" /><div className="w-[2px] h-[2px] bg-[#9cc7e6]" />
            <div className="w-[2px] h-[2px] bg-[#9cc7e6]" /><div className="w-[2px] h-[2px] bg-[#9cc7e6]" /><div className="w-[2px] h-[2px] bg-[#9cc7e6]" />
          </div>
        </div>
      </div>

      {/* dropdown menu */}
      <div className="absolute left-[151px] top-[132px] w-[132px] h-[196px] bg-white border border-[#a6a6a6] shadow-[1px_1px_2px_rgba(0,0,0,0.25)] p-[1px] text-[12px] text-[#444]">
        <div className="h-[24px] bg-[#cce4f7] border border-[#7fb6e0] flex items-center pl-[33px]">Confirmed</div>
        <div className="border-l border-[#d8d8d8] ml-[27px] pl-[6px]">
          {menu.map((m) => (
            <div key={m} className="h-[24px] flex items-center leading-none">{m}</div>
          ))}
        </div>
      </div>

      {/* red annotation arrow */}
      <svg width="330" height="90" viewBox="0 0 330 90" className="absolute left-0 top-0 pointer-events-none">
        <polygon points="199,77 215,46 223,53 309,0 317,0 317,3 231,60 232,65" fill="#f00000" />
      </svg>
    </div>
  );
}
